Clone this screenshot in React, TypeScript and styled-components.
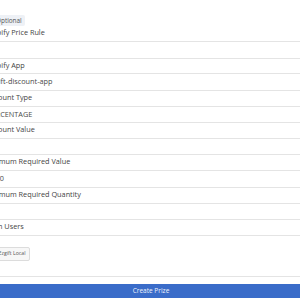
import React from 'react';
import styled, { createGlobalStyle } from 'styled-components';

const GlobalStyle = createGlobalStyle`
  html, body {
    margin: 0;
    padding: 0;
    background: #ffffff;
    overflow: hidden;
  }
  body {
    font-family: 'Open Sans', 'Liberation Sans', sans-serif;
    color: #444444;
  }
`;

const Page = styled.div`
  width: 342px;
  margin-left: -20px;
  padding-top: 6px;
`;

const BadgeRow = styled.div`
  height: 11px;
  margin-bottom: 9.3px;
`;

const Badge = styled.span`
  display: inline-block;
  margin-left: 13px;
  height: 11px;
  line-height: 11px;
  padding: 0 3px;
  font-size: 6.4px;
  color: #555555;
  background: #eef1f6;
  border-radius: 2px;
`;

const Label = styled.div`
  box-sizing: border-box;
  height: 14.8px;
  line-height: 12px;
  padding-left: 4px;
  font-size: 7.3px;
  color: #444444;
  white-space: nowrap;
`;

const Input = styled.div`
  box-sizing: border-box;
  height: 17.5px;
  line-height: 15.5px;
  padding-left: 7.2px;
  border-top: 1px solid #e4e4e4;
  border-bottom: 1px solid #e4e4e4;
  font-size: 7.3px;
  color: #4a4a4a;
  white-space: nowrap;
`;

const TagBox = styled.div`
  box-sizing: border-box;
  height: 42.5px;
  padding: 2.3px 0 0 13.6px;
  border-top: 1px solid #e4e4e4;
  border-bottom: 1px solid #e4e4e4;
`;

const Tag = styled.span`
  display: inline-block;
  box-sizing: border-box;
  height: 13.4px;
  line-height: 11.4px;
  padding: 0 4px;
  font-size: 5.2px;
  color: #555555;
  background: #f7f7f7;
  border: 1px solid #dcdcdc;
  border-radius: 2px;
`;

const SubmitButton = styled.button`
  display: block;
  width: 100%;
  height: 13.6px;
  margin-top: 7px;
  padding: 0;
  border: none;
  background: #3a6cc9;
  color: #eef3fc;
  font-family: 'Open Sans', 'Liberation Sans', sans-serif;
  font-size: 6.5px;
  line-height: 13.6px;
  text-align: center;
`;

const fields = [
  { label: 'Shopify Price Rule', value: '' },
  { label: 'Shopify App', value: 'ezgift-discount-app' },
  { label: 'Discount Type', value: 'PERCENTAGE' },
  { label: 'Discount Value', value: '' },
  { label: 'Minimum Required Value', value: '1000' },
  { label: 'Minimum Required Quantity', value: '' },
];

const App = () => (
  <>
    <GlobalStyle />
    <Page>
      <BadgeRow>
        <Badge>Optional</Badge>
      </BadgeRow>
      {fields.map((f) => (
        <React.Fragment key={f.label}>
          <Label>{f.label}</Label>
          <Input>{f.value}</Input>
        </React.Fragment>
      ))}
      <Label>Login Users</Label>
      <TagBox>
        <Tag>Ezgift Local</Tag>
      </TagBox>
      <SubmitButton>Create Prize</SubmitButton>
    </Page>
  </>
);

export default App;
